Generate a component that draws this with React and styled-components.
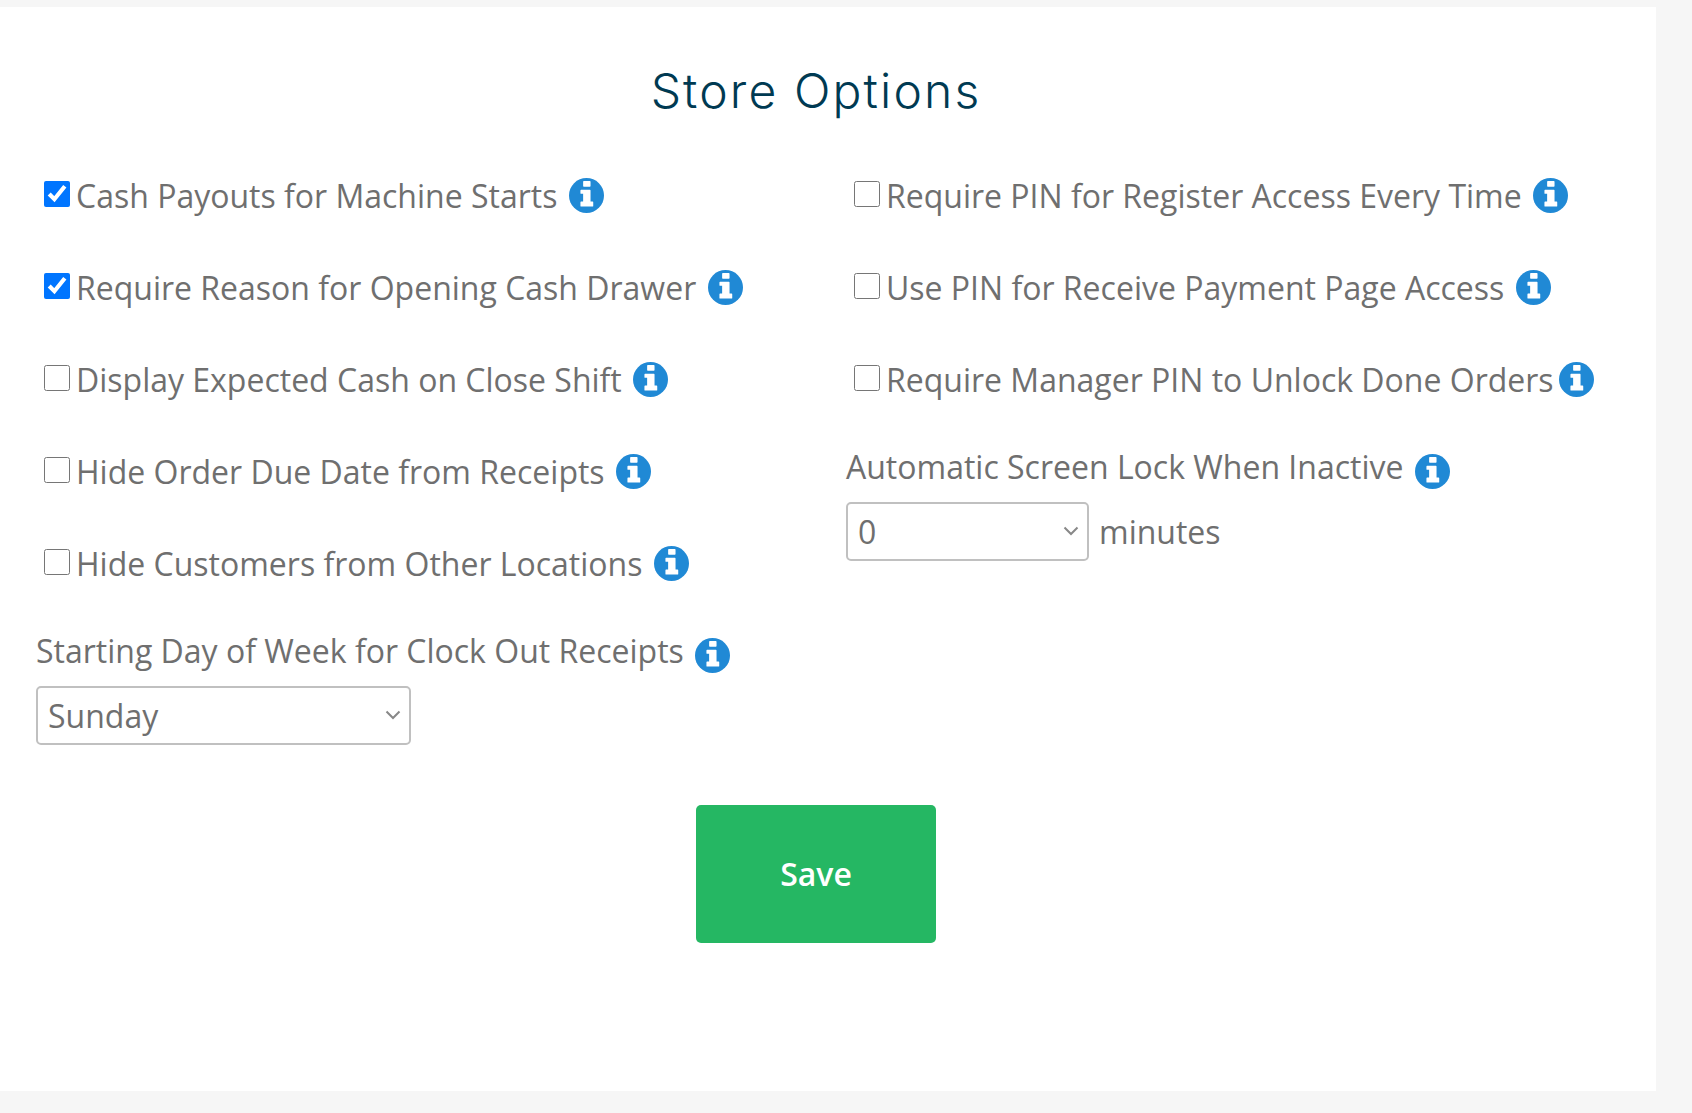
import React from "react";
import styled, { createGlobalStyle } from "styled-components";

const Global = createGlobalStyle`
  html, body { margin: 0; padding: 0; background: #f6f6f6; }
  body { font-family: "Open Sans", "Liberation Sans", sans-serif; }
  #root { height: 1113px; overflow: hidden; }
`;
const Page = styled.div`
  padding: 7px 36px 22px 0;
`;
const Card = styled.main`
  background: #fff;
  height: 1084px;
  padding: 50px 24px 0 36px;
  box-sizing: border-box;
  color: #6f6f6f;
  font-size: 32px;
`;
const Title = styled.h1`
  margin: 0 0 0 -36px;
  text-align: center;
  font-family: "Inter", "Open Sans", sans-serif;
  font-weight: 300;
  font-size: 48px;
  letter-spacing: 2.15px;
  line-height: 68px;
  color: #003a52;
`;
const Columns = styled.div`
  display: grid;
  grid-template-columns: 810px 1fr;
  margin-top: 49px;
`;
const Column = styled.section`
  display: flex;
  flex-direction: column;
`;
const CheckRow = styled.label`
  display: flex;
  align-items: center;
  height: 42px;
  margin-bottom: 50px;
  padding-left: 8px;
`;
const Check = styled.input.attrs({ type: "checkbox" })`
  width: 26px;
  height: 26px;
  margin: 0 6px 2px 0;
  flex: none;
`;
const InfoSvg = styled.svg`
  flex: none;
  width: 35px;
  height: 35px;
  margin-left: ${(p) => (p.$tight ? "5px" : "11.5px")};
`;
const FieldLabel = styled.div`
  display: flex;
  align-items: center;
  height: 42px;
`;
const FieldText = styled.span`
  padding-bottom: 9px;
`;
const FieldRow = styled.div`
  display: flex;
  align-items: center;
  gap: 10px;
  margin-top: 10px;
`;
const SelectWrap = styled.div`
  position: relative;
  width: ${(p) => p.$width}px;
  height: 59px;
`;
const Select = styled.select`
  appearance: none;
  width: 100%;
  height: 100%;
  box-sizing: border-box;
  padding: 0 10px;
  font: inherit;
  color: #6f6f6f;
  background: #fff;
  border: 2px solid #c0c0c0;
  border-radius: 5px;
`;
const Chevron = styled.svg`
  position: absolute;
  right: 10px;
  top: 24px;
  width: 16px;
  height: 10px;
  pointer-events: none;
`;
const Footer = styled.div`
  display: flex;
  justify-content: center;
  margin: 60px 0 0 -36px;
`;
const SaveButton = styled.button`
  width: 240px;
  height: 138px;
  padding: 0 0 2px;
  border: 0;
  border-radius: 5px;
  background: #25b763;
  color: #fff;
  font: 600 32px "Open Sans", sans-serif;
`;

const Info = ({ tight }) => (
  <InfoSvg viewBox="0 0 104 104" $tight={tight} aria-hidden="true">
    <circle cx="52" cy="52" r="52" fill="#2089d5" />
    <path
      fill="#fff"
      d="M44 9h18a2 2 0 0 1 2 2v13a2 2 0 0 1-2 2H44a2 2 0 0 1-2-2V11a2 2 0 0 1 2-2zM36 35h26a2 2 0 0 1 2 2v33h6a2 2 0 0 1 2 2v11a2 2 0 0 1-2 2H36a2 2 0 0 1-2-2V72a2 2 0 0 1 2-2h6V47h-6a2 2 0 0 1-2-2v-8a2 2 0 0 1 2-2z"
    />
  </InfoSvg>
);

const Dropdown = ({ width, value }) => (
  <SelectWrap $width={width}>
    <Select defaultValue={value}>
      <option>{value}</option>
    </Select>
    <Chevron viewBox="0 0 16 10" aria-hidden="true">
      <path d="M1.5 1.5 8 8l6.5-6.5" fill="none" stroke="#888" strokeWidth="2" />
    </Chevron>
  </SelectWrap>
);

const left = [
  ["Cash Payouts for Machine Starts", true],
  ["Require Reason for Opening Cash Drawer", true],
  ["Display Expected Cash on Close Shift", false],
  ["Hide Order Due Date from Receipts", false],
  ["Hide Customers from Other Locations", false],
];
const right = [
  ["Require PIN for Register Access Every Time"],
  ["Use PIN for Receive Payment Page Access"],
  ["Require Manager PIN to Unlock Done Orders", false, true],
];

const Option = ({ text, checked, tight }) => (
  <CheckRow>
    <Check defaultChecked={!!checked} />
    {text}
    <Info tight={tight} />
  </CheckRow>
);

export default function App() {
  return (
    <Page>
      <Global />
      <Card>
        <Title>Store Options</Title>
        <Columns>
          <Column>
            {left.map(([t, c]) => (
              <Option key={t} text={t} checked={c} />
            ))}
            <FieldLabel>
              <FieldText>Starting Day of Week for Clock Out Receipts</FieldText>
              <Info />
            </FieldLabel>
            <FieldRow>
              <Dropdown width={375} value="Sunday" />
            </FieldRow>
          </Column>
          <Column>
            {right.map(([t, c, tight]) => (
              <Option key={t} text={t} checked={c} tight={tight} />
            ))}
            <FieldLabel>
              <FieldText>Automatic Screen Lock When Inactive</FieldText>
              <Info />
            </FieldLabel>
            <FieldRow>
              <Dropdown width={243} value="0" />
              minutes
            </FieldRow>
          </Column>
        </Columns>
        <Footer>
          <SaveButton>Save</SaveButton>
        </Footer>
      </Card>
    </Page>
  );
}
